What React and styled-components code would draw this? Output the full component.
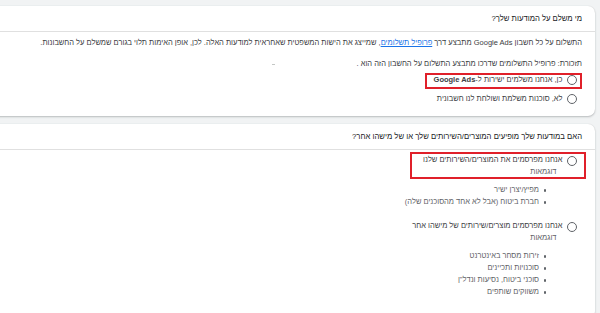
import React from 'react'
import styled, { createGlobalStyle, css } from 'styled-components'

const colors = {
  page: '#f1f3f4',
  card: '#ffffff',
  line: '#e0e0e0',
  title: '#202124',
  text: '#3c4043',
  muted: '#5f6368',
  link: '#1a73e8',
  mark: '#e0202a'
}

const GlobalStyle = createGlobalStyle`
  html, body {
    margin: 0;
    padding: 0;
    background: ${colors.page};
  }

  body {
    font-family: "Liberation Sans", Arial, sans-serif;
    font-size: 7.5px;
    color: ${colors.text};
    overflow: hidden;
  }
`

// ======================
// LAYOUT
// ======================

const Page = styled.div`
  direction: rtl;
  width: 600px;
  height: 313px;
  overflow: hidden;
  padding-top: 6px;
  box-sizing: border-box;
  display: flex;
  flex-direction: column;
  gap: 8px;
`

const Card = styled.section`
  background: ${colors.card};
  margin-right: 5px;
  margin-left: -20px;
  border-radius: 7px;
  box-shadow: 0 1px 2px rgba(60, 64, 67, 0.3), 0 0 1px rgba(60, 64, 67, 0.15);
  flex-shrink: 0;
`

const CardHeader = styled.h2`
  margin: 0;
  height: 25px;
  display: flex;
  align-items: center;
  padding: 0 13px 0 0;
  font-size: 7.7px;
  font-weight: normal;
  color: ${colors.title};
  border-bottom: 1px solid ${colors.line};
`

const CardBody = styled.div`
  padding: ${props => props.pad};
`

// ======================
// TYPOGRAPHY
// ======================

const Paragraph = styled.p`
  margin: 0 0 ${props => props.gap || 0}px;
  padding-right: 13px;
  line-height: 12px;
  white-space: nowrap;
  color: ${colors.text};
`

const Link = styled.a`
  color: ${colors.link};
  text-decoration: underline;
`

const Blur = styled.span`
  display: inline-block;
  width: 3px;
  height: 1px;
  background: #c4c7c5;
  vertical-align: middle;
  margin-right: ${props => props.offset}px;
`

// ======================
// RADIO OPTIONS
// ======================

const Options = styled.div`
  display: flex;
  flex-direction: column;
  gap: ${props => props.gap}px;
  padding-right: 18px;
`

const Option = styled.div`
  display: flex;
  flex-direction: column;
`

const OptionHead = styled.div`
  position: relative;
  width: fit-content;
  display: flex;
  align-items: flex-start;
  gap: 4px;

  ${props => props.mark && css`
    &::after {
      content: '';
      position: absolute;
      top: ${props.mark[0]}px;
      left: ${props.mark[1]}px;
      bottom: ${props.mark[2]}px;
      right: ${props.mark[3]}px;
      border: 2px solid ${colors.mark};
      pointer-events: none;
    }
  `}
`

const Radio = styled.span`
  width: 8.5px;
  height: 8.5px;
  border: 1.4px solid ${colors.muted};
  border-radius: 50%;
  flex-shrink: 0;
  margin-top: ${props => props.top || 0.5}px;
`

const OptionText = styled.div`
  display: flex;
  flex-direction: column;
`

const Label = styled.span`
  line-height: 12px;
  color: ${colors.text};
  font-weight: ${props => props.strong ? 'bold' : 'normal'};
  white-space: nowrap;
`

const Hint = styled.span`
  line-height: 12px;
  color: ${colors.muted};
  margin-right: 6px;
`

const Bullets = styled.ul`
  list-style: none;
  margin: 6px 0 0;
  padding: 0 31px 0 0;
`

const Bullet = styled.li`
  position: relative;
  line-height: 12px;
  color: ${colors.muted};
  white-space: nowrap;
  padding-right: 7px;

  &::before {
    content: '';
    position: absolute;
    right: 0;
    top: 5px;
    width: 2.5px;
    height: 2.5px;
    border-radius: 50%;
    background: ${colors.muted};
  }
`

const examplesOwn = ['מפיץ/יצרן ישיר', 'חברת ביטוח (אבל לא אחד מהסוכנים שלה)']
const examplesOther = ['זירות מסחר באינטרנט', 'סוכנויות ותכיינים', 'סוכני ביטוח, נסיעות ונדל"ן', 'משווקים שותפים']

export default function App () {
  return (
    <>
      <GlobalStyle />
      <Page>
        <Card>
          <CardHeader>מי משלם על המודעות שלך?</CardHeader>
          <CardBody pad='5px 0 11px'>
            <Paragraph gap={9}>
              התשלום על כל חשבון Google Ads מתבצע דרך <Link>פרופיל תשלומים</Link>, שמייצג את הישות המשפטית שאחראית למודעות האלה. לכן, אופן האימות תלוי בגורם שמשלם על החשבונות.
            </Paragraph>
            <Paragraph gap={4}>
              תזכורת: פרופיל התשלומים שדרכו מתבצע התשלום על החשבון הזה הוא .<Blur offset={82} />
            </Paragraph>
            <Options gap={7}>
              <Option>
                <OptionHead mark={[-1, -9, -3, -5]}>
                  <Radio />
                  <Label>כן, אנחנו משלמים ישירות ל-<Label strong>Google Ads</Label></Label>
                </OptionHead>
              </Option>
              <Option>
                <OptionHead>
                  <Radio />
                  <Label>לא, סוכנות משלמת ושולחת לנו חשבונית</Label>
                </OptionHead>
              </Option>
            </Options>
          </CardBody>
        </Card>

        <Card>
          <CardHeader>האם במודעות שלך מופיעים המוצרים/השירותים שלך או של מישהו אחר?</CardHeader>
          <CardBody pad='4px 0 20px'>
            <Options gap={12}>
              <Option>
                <OptionHead mark={[-2, -13, -1, -9]}>
                  <Radio top={1.5} />
                  <OptionText>
                    <Label>אנחנו מפרסמים את המוצרים/השירותים שלנו</Label>
                    <Hint>דוגמאות</Hint>
                  </OptionText>
                </OptionHead>
                <Bullets>
                  {examplesOwn.map(item => <Bullet key={item}>{item}</Bullet>)}
                </Bullets>
              </Option>
              <Option>
                <OptionHead>
                  <Radio top={1.5} />
                  <OptionText>
                    <Label>אנחנו מפרסמים מוצרים/שירותים של מישהו אחר</Label>
                    <Hint>דוגמאות</Hint>
                  </OptionText>
                </OptionHead>
                <Bullets>
                  {examplesOther.map(item => <Bullet key={item}>{item}</Bullet>)}
                </Bullets>
              </Option>
            </Options>
          </CardBody>
        </Card>
      </Page>
    </>
  )
}
